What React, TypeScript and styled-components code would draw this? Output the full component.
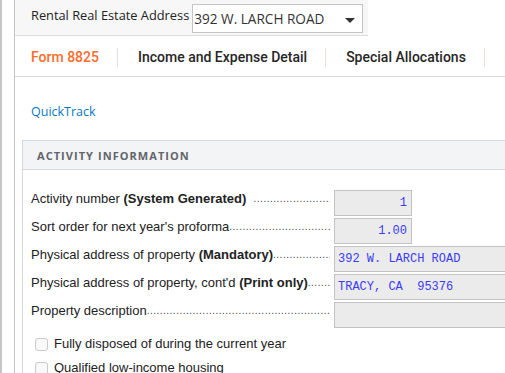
import { createGlobalStyle, styled } from 'styled-components';

const GlobalStyle = createGlobalStyle`
  html, body {
    margin: 0;
    padding: 0;
    background: #ffffff;
    font-family: "Liberation Sans", Arial, sans-serif;
    overflow: hidden;
  }
`;

const tabs = ['Form 8825', 'Income and Expense Detail', 'Special Allocations', 'State'];

const rows = [
  { label: 'Activity number', strong: '(System Generated)', gap: true, value: '1', narrow: true },
  { label: "Sort order for next year's proforma", value: '1.00', narrow: true },
  { label: 'Physical address of property', strong: '(Mandatory)', gap: true, value: '392 W. LARCH ROAD' },
  { label: "Physical address of property, cont'd", strong: '(Print only)', gap: true, value: 'TRACY, CA  95376' },
  { label: 'Property description', value: '' },
];

const checks = ['Fully disposed of during the current year', 'Qualified low-income housing'];

function App() {
  return (
    <>
      <GlobalStyle />
      <Page>
        <Content>
          <HeaderBar>
            <HeaderLabel>Rental Real Estate Address</HeaderLabel>
            <Select>
              <span>392 W. LARCH ROAD</span>
              <Caret />
            </Select>
          </HeaderBar>

          <TabBar>
            {tabs.map((t, i) => (
              <Tab key={t} $active={i === 0 || i === 3} $first={i === 0}>
                {t}
              </Tab>
            ))}
          </TabBar>

          <Body>
            <QuickTrack href="#">QuickTrack</QuickTrack>

            <Panel>
              <PanelHeader>ACTIVITY INFORMATION</PanelHeader>
              <PanelBody>
                {rows.map((r) => (
                  <Row key={r.label}>
                    <LabelCell>
                      <LabelText>
                        {r.label}
                        {r.strong && (
                          <>
                            {r.gap ? ' ' : ''}
                            <b>{r.strong}</b>
                            {r.label.startsWith('Activity') ? '  ' : ''}
                          </>
                        )}
                      </LabelText>
                      <Leader>{'.'.repeat(120)}</Leader>
                    </LabelCell>
                    <Field $narrow={!!r.narrow}>{r.value}</Field>
                  </Row>
                ))}

                <Checks>
                  {checks.map((c) => (
                    <CheckRow key={c}>
                      <CheckBox />
                      <span>{c}</span>
                    </CheckRow>
                  ))}
                </Checks>
              </PanelBody>
            </Panel>
          </Body>
        </Content>
      </Page>
    </>
  );
}

export default App;

const Page = styled.div`
  width: 505px;
  height: 373px;
  border-left: 2px solid #c6c6c6;
  box-sizing: border-box;
  overflow: hidden;
`;

const Content = styled.div`
  margin-left: 12px;
  height: 100%;
  border-left: 1px solid #c6c6c6;
`;

const HeaderBar = styled.div`
  display: flex;
  align-items: center;
  width: 353px;
  height: 36px;
  box-sizing: border-box;
  padding-left: 16px;
  background: #f7f7f7;
  border-bottom: 1px solid #dcdcdc;
`;

const HeaderLabel = styled.span`
  font-family: "Open Sans", sans-serif;
  font-size: 12.8px;
  color: #222;
  margin-right: 3px;
  margin-top: -5px;
`;

const Select = styled.div`
  display: flex;
  align-items: center;
  justify-content: space-between;
  width: 171px;
  height: 29px;
  box-sizing: border-box;
  margin-top: 2px;
  border: 1px solid #c4c4c4;
  background: #fff;
  padding: 0 7px 0 1px;
  font-family: "Open Sans", sans-serif;
  font-size: 13.6px;
  color: #333;
`;

const Caret = styled.i`
  width: 0;
  height: 0;
  margin-top: 3px;
  border-left: 5.5px solid transparent;
  border-right: 5.5px solid transparent;
  border-top: 5px solid #333;
`;

const TabBar = styled.div`
  display: flex;
  align-items: center;
  height: 41px;
  box-sizing: border-box;
  padding: 3px 0 0 16px;
  border-bottom: 1px solid #dcdcdc;
  white-space: nowrap;
`;

const Tab = styled.div<{ $active: boolean; $first: boolean }>`
  font-family: Roboto, sans-serif;
  font-weight: 500;
  font-size: 14px;
  color: ${(p) => (p.$active ? '#ff6b2c' : '#262626')};
  padding: 0 18px 0 20px;
  line-height: 19px;
  border-right: 1px solid ${(p) => (p.$first ? '#e2e2e2' : '#f5dcdc')};
  &:first-child {
    padding-left: 0;
  }
`;

const Body = styled.div`
  padding-left: 7px;
`;

const QuickTrack = styled.a`
  display: block;
  margin: 26px 0 0 9px;
  font-family: "Open Sans", sans-serif;
  font-size: 12.5px;
  line-height: 18px;
  color: #0a77bd;
  text-decoration: none;
`;

const Panel = styled.div`
  margin-top: 19px;
  width: 600px;
  border: 1px solid #d4d7dc;
`;

const PanelHeader = styled.div`
  height: 28px;
  display: flex;
  align-items: center;
  padding-left: 14px;
  background: #f3f4f5;
  border-bottom: 1px solid #d4d7dc;
  font-family: "Open Sans", sans-serif;
  font-weight: 700;
  font-size: 11px;
  letter-spacing: 1.05px;
  color: #62656b;
`;

const PanelBody = styled.div`
  padding: 20px 0 20px 8px;
  display: flex;
  flex-direction: column;
  gap: 2px;
`;

const Row = styled.div`
  display: flex;
  align-items: flex-start;
  height: 26px;
`;

const LabelCell = styled.div`
  display: flex;
  width: 299px;
  margin-right: 4px;
  padding-top: 1px;
  font-size: 13px;
  line-height: 16px;
  color: #222;
  white-space: nowrap;
  overflow: hidden;

  b {
    font-weight: 700;
  }
`;

const LabelText = styled.span`
  flex: none;
  white-space: pre;
`;

const Leader = styled.span`
  flex: 1;
  min-width: 0;
  overflow: hidden;
  font-size: 10px;
  letter-spacing: 0.5px;
  color: #444;
`;

const Field = styled.div<{ $narrow: boolean }>`
  flex: none;
  width: ${(p) => (p.$narrow ? '78px' : '180px')};
  height: 26px;
  box-sizing: border-box;
  border: 1px solid #c2c2c2;
  background: #ebebeb;
  display: flex;
  align-items: center;
  justify-content: ${(p) => (p.$narrow ? 'flex-end' : 'flex-start')};
  padding: 0 4px 0 3px;
  font-family: "Liberation Mono", "Courier New", monospace;
  font-size: 12px;
  color: #3b3bf5;
  white-space: pre;
`;

const Checks = styled.div`
  display: flex;
  flex-direction: column;
  gap: 10px;
  margin-top: 7px;
  padding-left: 4px;
`;

const CheckRow = styled.label`
  display: flex;
  align-items: center;
  gap: 6px;
  font-size: 13px;
  line-height: 14px;
  color: #222;
`;

const CheckBox = styled.span`
  width: 13px;
  height: 13px;
  box-sizing: border-box;
  border: 1px solid #c9c9c9;
  border-radius: 3px;
  background: #f9f9f9;
`;
